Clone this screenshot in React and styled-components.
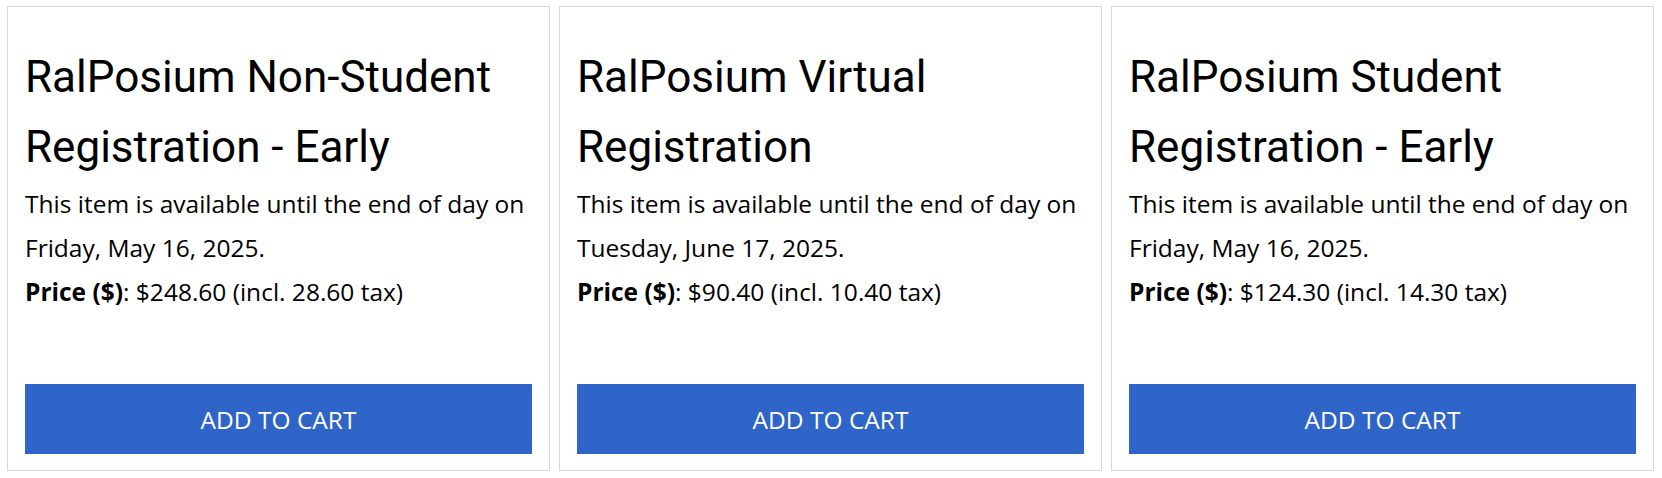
import React from "react"
import styled, { createGlobalStyle } from "styled-components"

const GlobalStyle = createGlobalStyle`
    body {
        margin: 0;
        background: #ffffff;
        font-family: "Open Sans", "Noto Sans", Arial, sans-serif;
        color: #000000;
    }
`;

const Grid = styled.section`
    display: grid;
    grid-template-columns: repeat(3, 1fr);
    gap: 9px;
    padding: 6px 8px 0 7px;
`;

const Card = styled.article`
    display: flex;
    flex-direction: column;
    min-height: 465px;
    box-sizing: border-box;
    border: 1px solid #d9d9d9;
    padding: 0 17px 16px 17px;
    background: #ffffff;
`;

const Title = styled.h2`
    margin: 35px 0 0 0;
    font-family: Roboto, "Liberation Sans", Arial, sans-serif;
    font-weight: 400;
    font-size: 44px;
    line-height: 70px;
`;

const Text = styled.p`
    margin: 0;
    font-size: 24.5px;
    line-height: ${(p) => p.$lh || "44px"};
`;

const Button = styled.button`
    margin-top: auto;
    width: 100%;
    height: 70px;
    border: none;
    background-color: #2f64c8;
    color: #ffffff;
    font-family: "Open Sans", "Noto Sans", Arial, sans-serif;
    font-size: 24.5px;
    text-transform: uppercase;
    cursor: pointer;
    :hover {
        background-color: #2a59b3;
    }
`;

const items = [
    {
        title: "RalPosium Non-Student Registration - Early",
        until: "Friday, May 16, 2025.",
        price: "$248.60 (incl. 28.60 tax)",
    },
    {
        title: "RalPosium Virtual Registration",
        until: "Tuesday, June 17, 2025.",
        price: "$90.40 (incl. 10.40 tax)",
    },
    {
        title: "RalPosium Student Registration - Early",
        until: "Friday, May 16, 2025.",
        price: "$124.30 (incl. 14.30 tax)",
    },
];

const App = () => (
    <>
        <GlobalStyle />
        <Grid>
            {items.map((item) => (
                <Card key={item.title}>
                    <Title>{item.title}</Title>
                    <Text>This item is available until the end of day on {item.until}</Text>
                    <Text $lh="43px"><b>Price ($)</b>: {item.price}</Text>
                    <Button>Add to cart</Button>
                </Card>
            ))}
        </Grid>
    </>
);

export default App;
